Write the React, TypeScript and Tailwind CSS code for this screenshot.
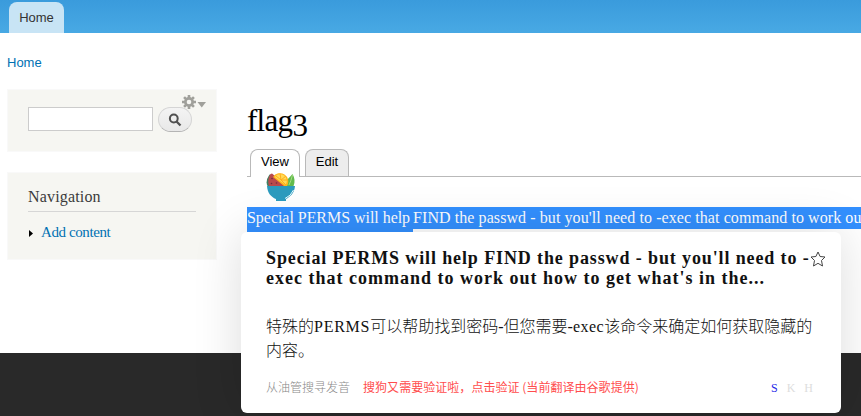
import React from "react";

const serif = "font-['Liberation_Serif','Noto_Sans_CJK_SC',serif]";
const sans = "font-['Liberation_Sans',Arial,sans-serif]";

function FruitBowl() {
  return (
    <svg className="absolute left-[266px] top-[172px] h-[30px] w-[30px]" viewBox="0 0 30 30">
      <path d="M3.500 2.500Q-1 9 1.500 14H5L6 3Z" fill="#3f8062" />
      <path d="M4.500 2Q1 7 3 14H21L6 1.500Z" fill="#b94a4c" />
      <path d="M26.500 2Q30 8 27.500 14H21L21 8Z" fill="#62bb4d" />
      <path d="M26.500 3Q25 9 23 13" stroke="#a6dc83" strokeWidth="1" fill="none" />
      <path d="M7 5A8.200 8.200 0 1 1 21 14H18Z" fill="#ffb51c" />
      <path d="M8.700 5A6.700 6.700 0 1 1 19.500 13Z" fill="#ffda58" />
      <path d="M15 8L10 4M15 8L14 1.500M15 8L20 4M15 8H21.500M15 8L20 13" stroke="#ffad1c" strokeWidth="1" />
      <g fill="#712d3d"><circle cx="6" cy="6.500" r=".8" /><circle cx="5.500" cy="11.500" r=".8" /><circle cx="10.500" cy="11" r=".8" /></g>
      <path d="M1 14H29C28.500 21 24 25 20 27V29H10V27C5 25 1.500 21 1 14Z" fill="#2b9abd" />
      <path d="M27.500 18Q25 24 19 26.500" stroke="#e5f8fb" strokeWidth="1" fill="none" />
    </svg>
  );
}

function SearchBlock() {
  return (
    <section className="relative h-[63px] border border-[#f9f9f9] bg-[#f6f6f2] pl-5 pt-[17px]">
      <div className="flex items-start gap-[5px]">
        <input aria-label="Search" className="h-6 w-[125px] border border-[#ccc] bg-white" />
        <button aria-label="Search" className="flex h-[25px] w-[34px] items-center justify-center rounded-full border border-[#d5d5d5] border-b-[#b4b4b4] bg-linear-to-b from-[#f4f4f4] to-[#e8e8e8]">
          <svg className="size-[14px]" viewBox="0 0 14 14" fill="none" stroke="#505050">
            <circle cx="5.800" cy="5.500" r="3.900" strokeWidth="2" />
            <path d="M8.500 8.500L12.500 12.500" strokeWidth="2.300" />
          </svg>
        </button>
      </div>
      <svg className="absolute left-[174px] top-[5px] h-[15px] w-[25px]" viewBox="0 0 25 15">
        <g fill="#a0a09b">
          <circle cx="7" cy="7" r="5" />
          <path d="M5.700 0h2.600v14H5.700zM0 5.700h14v2.600H0z" />
          <path d="M5.700 0h2.600v14H5.700zM0 5.700h14v2.600H0z" transform="rotate(45 7 7)" />
          <path d="M15.500 7H24L19.750 12.500Z" />
        </g>
        <circle cx="7" cy="7" r="2.300" fill="#f6f6f2" />
      </svg>
    </section>
  );
}

function NavigationBlock() {
  return (
    <section className={`mt-5 h-[88px] border border-[#f9f9f9] bg-[#f6f6f2] px-5 pt-[15px] ${serif}`}>
      <h2 className="h-[24px] border-b border-[#d6d6d6] text-[16px] leading-[18px] tracking-[0.17px] text-[#3b3b3b]">Navigation</h2>
      <div className="mt-[11px] flex items-center text-[#0071b3]">
        <svg className="mr-2 mt-[2px] h-[7px] w-[5px]" viewBox="0 0 5 7"><path d="M1 0L5 3.500L1 7Z" fill="black" /></svg>
        <a className="text-[15px] leading-[18px] tracking-[-0.4px]">Add content</a>
      </div>
    </section>
  );
}

function TranslationCard() {
  return (
    <aside className={`absolute left-[241px] top-[232px] h-[181px] w-[600px] rounded-[6px] bg-white pl-[25px] pr-[28px] pt-[16px] shadow-[0_0_50px_rgba(0,0,0,0.14)] ${serif}`}>
      <div className="whitespace-nowrap text-[18px] font-bold leading-5 text-[#111]">
        <p className="tracking-[0.88px]">Special PERMS will help FIND the passwd - but you'll need to -</p>
        <p className="tracking-[1px]">exec that command to work out how to get what's in the...</p>
      </div>
      <svg className="absolute left-[569px] top-[19px] size-4" viewBox="0 0 16 16">
        <path d="M8 1L10.100 5.500L15 6L11.500 9.500L12.500 15L8 12.300L3.500 15L4.500 9.500L1 6L5.900 5.500Z" fill="white" stroke="#444" />
      </svg>
      <div className="mt-[27px] whitespace-nowrap text-[16px] leading-6 text-[#111]">
        <p className="font-light">特殊的<span className="font-normal tracking-[0.75px]">PERMS</span>可以帮助找到密码-但您需要-<span className="font-normal tracking-[0.5px]">exec</span>该命令来确定如何获取隐藏的</p>
        <p className="font-light">内容。</p>
      </div>
      <footer className="mt-[16px] flex items-center whitespace-nowrap text-[12px] leading-4 font-['Noto_Sans_CJK_SC',sans-serif]">
        <span className="font-light text-[#888]">从油管搜寻发音</span>
        <a className="ml-[13px] tracking-[0.04px] text-[#ff4d4d]">搜狗又需要验证啦，点击验证 (当前翻译由谷歌提供)</a>
        <span className="relative top-px ml-auto flex gap-[9px] text-[12px] text-[#ddd] font-['Liberation_Serif',serif]"><b className="font-normal text-[#2929e8]">S</b><span>K</span><span>H</span></span>
      </footer>
    </aside>
  );
}

export default function App() {
  return (
    <div className={`relative flex h-[416px] w-[861px] flex-col overflow-hidden bg-white text-[13px] ${sans}`}>
      <header className="flex h-[33px] shrink-0 items-end bg-linear-to-b from-[#3a9bdc] to-[#48a9e4] pl-[9px]">
        <a className="flex h-[31px] w-[55px] items-center justify-center rounded-t-[8px] bg-[#c8e4f5] text-[#333]">Home</a>
      </header>
      <nav className="h-[56px] shrink-0 pl-[7px] pt-[20px] leading-5 text-[#0071b3]">Home</nav>
      <main className="flex h-[264px] shrink-0">
        <aside className="ml-[7px] w-[210px] shrink-0"><SearchBlock /><NavigationBlock /></aside>
        <section className="ml-[30px] w-[614px]">
          <h1 className={`h-[60px] pt-[16px] text-[31px] leading-[32px] tracking-[-0.7px] text-black ${serif}`}>flag<span className="inline-block translate-y-[5px]">3</span></h1>
          <div className="flex h-[28px] items-end border-b border-[#b9b9b9] pl-[3px]">
            <a className="-mb-px flex h-[28px] w-[50px] justify-center rounded-t-[8px] border border-b-0 border-[#b9b9b9] bg-white pt-[2px] leading-5 text-black">View</a>
            <a className="ml-[5px] flex h-[27px] w-[44px] justify-center rounded-t-[8px] border border-b-0 border-[#b9b9b9] bg-[#ededed] pt-[2px] leading-5 text-black">Edit</a>
          </div>
          <p className={`mt-[30px] flex h-[22px] whitespace-nowrap bg-[#3390ff] text-[16px] leading-[22px] text-white ${serif}`}>
            <span className="h-[25px] w-[166px] shrink-0 bg-[#3390ff] tracking-[-0.04px]">Special PERMS will help </span>
            <span className="tracking-[0.08px]">FIND the passwd - but you'll need to -exec that command to work ou</span>
          </p>
        </section>
      </main>
      <footer className="h-[63px] shrink-0 bg-[#292929]" />
      <TranslationCard />
      <FruitBowl />
    </div>
  );
}
